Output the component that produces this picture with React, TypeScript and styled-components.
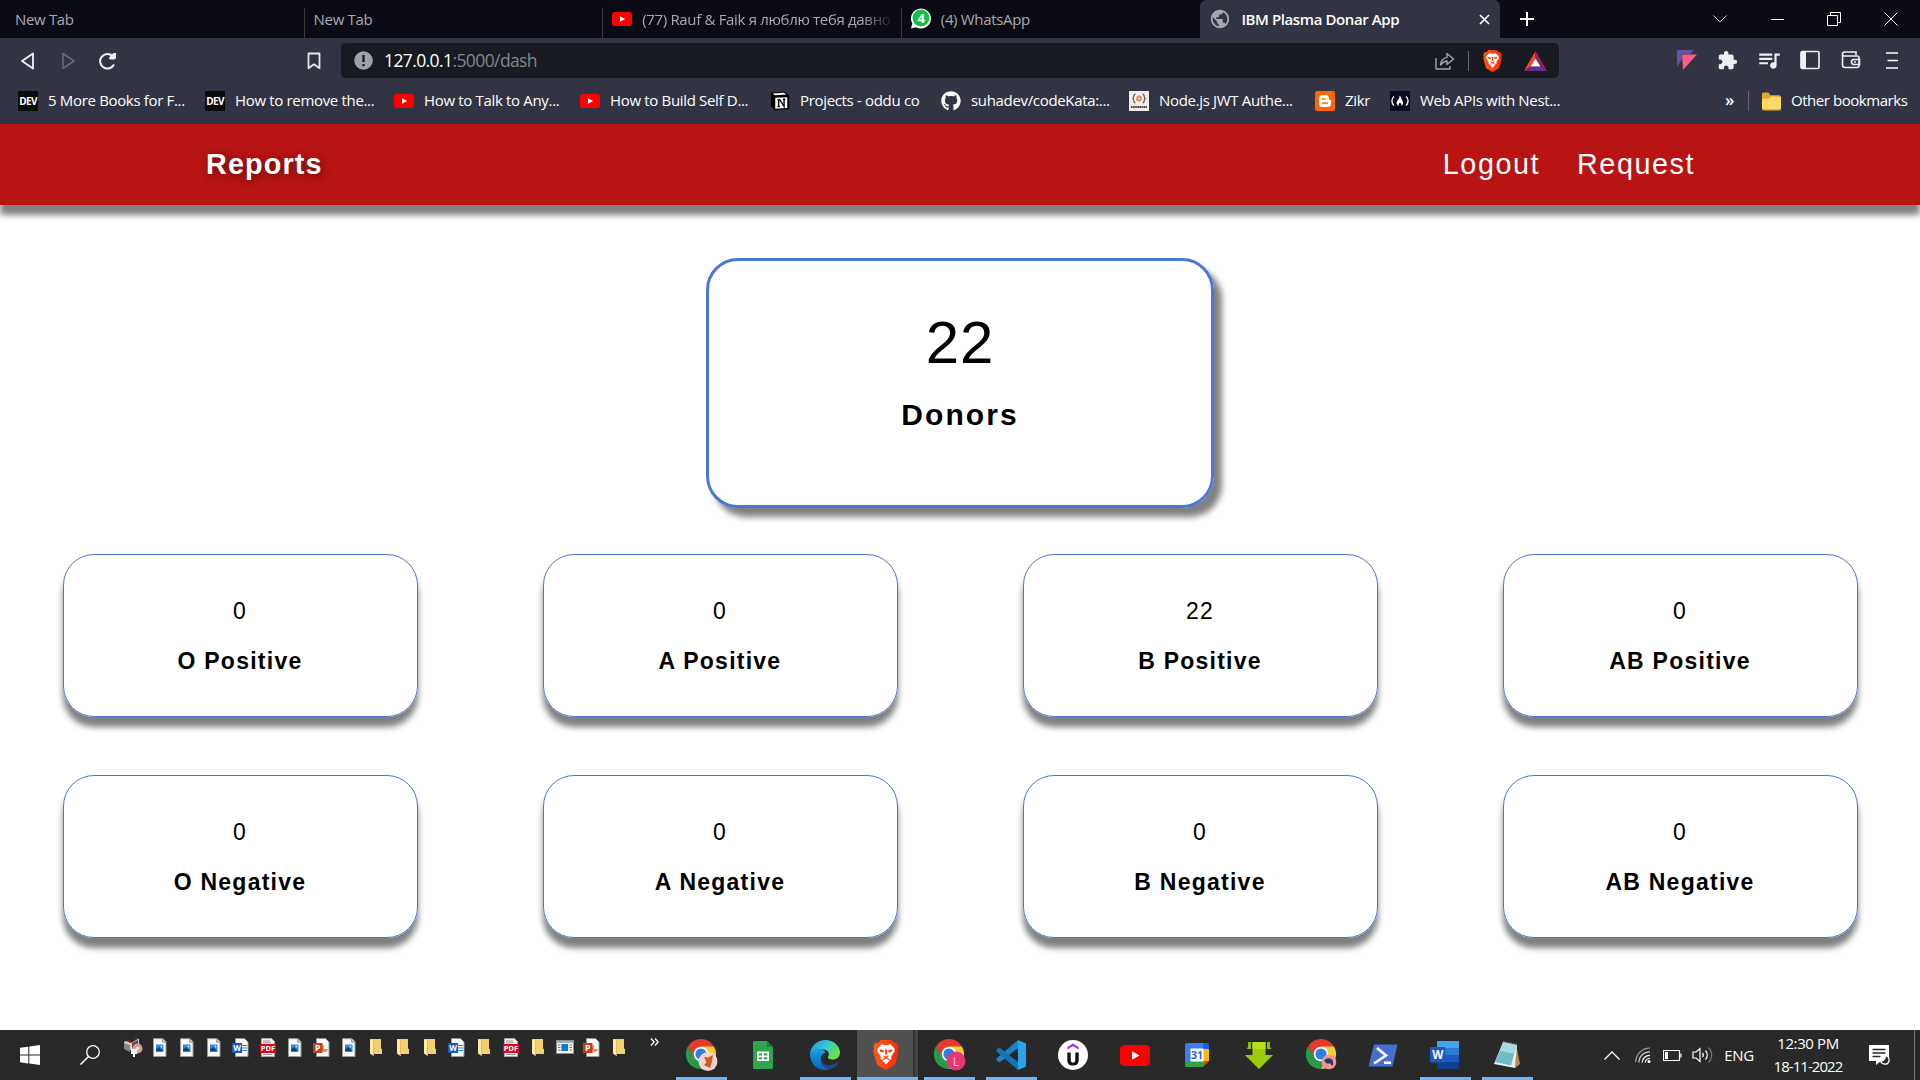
import React from 'react';
import styled, { createGlobalStyle, css } from 'styled-components';
import { FaGithub } from 'react-icons/fa';
import { MdExtension, MdPublic, MdQueueMusic } from 'react-icons/md';

const GlobalStyle = createGlobalStyle`
  * { box-sizing: border-box; }
  body { margin: 0; background: #fff; overflow: hidden; }
  svg { display: block; flex: none; }
`;

const uiFont = css`font-family: "Open Sans", "Noto Sans", sans-serif;`;

const Screen = styled.div`
  width: 1920px;
  height: 1080px;
  display: flex;
  flex-direction: column;
  background: #fff;
  ${uiFont}
`;

/* ---------- browser chrome ---------- */
const TabStrip = styled.div`
  height: 38px;
  padding-left: 6px;
  display: flex;
  background: #0a0b14;
`;
const Tab = styled.div<{ $active?: boolean; $divider?: boolean }>`
  width: ${p => (p.$active ? 300 : 298.6)}px;
  padding: ${p => (p.$active ? '0 9px' : '0 9px 1px')};
  display: flex;
  align-items: center;
  gap: 10px;
  font-size: 15px;
  white-space: nowrap;
  letter-spacing: ${p => (p.$active ? '-0.4px' : '-0.33px')};
  color: ${p => (p.$active ? '#fff' : '#a9aab0')};
  font-weight: ${p => (p.$active ? 600 : 400)};
  background: ${p => (p.$active ? '#323443' : 'transparent')};
  border-radius: ${p => (p.$active ? '6px 6px 0 0' : 0)};
  border-right: 1px solid transparent;
  border-image: ${p => (p.$divider ? 'linear-gradient(transparent 9px, #3a3b42 9px) 1' : 'none')};
`;
const TabTitle = styled.span<{ $fade?: boolean }>`
  flex: 1;
  overflow: hidden;
  line-height: 22px;
  ${p => p.$fade && css`mask-image: linear-gradient(90deg, #000 88%, transparent 101%);`}
`;
const NewTab = styled.div`
  width: 54px;
  display: grid;
  place-items: center;
`;
const WindowControls = styled.div`
  margin-left: auto;
  display: grid;
  grid-template-columns: repeat(4, 57.2px);
  place-items: center;
`;
const AddressRow = styled.div`
  height: 45px;
  display: flex;
  align-items: center;
  background: #323443;
`;
const NavButtons = styled.div`
  width: 341px;
  display: flex;
  align-items: center;
  padding-left: 20px;
`;
const NavSlot = styled.div<{ $w: number }>`
  width: ${p => p.$w}px;
  display: flex;
`;
const AddressBar = styled.div`
  width: 1218px;
  height: 35px;
  display: flex;
  align-items: center;
  border-radius: 5px;
  background: #171a21;
  padding: 0 12px 0 13px;
  font-size: 17.5px;
  letter-spacing: -0.6px;
  color: #fff;
`;
const Url = styled.span`
  flex: 1;
  padding: 0 0 2px 11px;
  line-height: 24px;
`;
const UrlPath = styled.span`color: #84868d;`;
const AddressTools = styled.div`
  display: flex;
  align-items: center;
`;
const Divider = styled.div<{ $h: number }>`
  width: 1px;
  height: ${p => p.$h}px;
  background: #666874;
`;
const Extensions = styled.div`
  margin-left: auto;
  margin-right: 8px;
  padding-bottom: 1px;
  display: grid;
  grid-template-columns: repeat(6, 41px);
  place-items: center;
  color: #efeff1;
`;
const BookmarkBar = styled.div`
  height: 41px;
  padding: 0 14px 5px 18px;
  display: flex;
  align-items: center;
  background: #323443;
  color: #fff;
  font-size: 15px;
  letter-spacing: -0.33px;
  line-height: 22px;
`;
const Bookmark = styled.div<{ $w: number }>`
  width: ${p => p.$w}px;
  display: flex;
  align-items: center;
  gap: 10px;
  white-space: nowrap;
`;
const BookmarkLabel = styled.span`padding-bottom: 2px;`;
const DevBadge = styled.span`
  width: 20px;
  height: 20px;
  display: grid;
  place-items: center;
  background: #0b0b0c;
  font: 700 10px/20px "Open Sans", sans-serif;
  letter-spacing: -0.6px;
`;
const Overflow = styled.span`
  margin-left: auto;
  width: 23px;
  padding-bottom: 2px;
  font-size: 17px;
  font-weight: 600;
  line-height: 18px;
`;
const OtherBookmarks = styled.div`
  margin-left: 13px;
  width: 144px;
  display: flex;
  align-items: center;
  gap: 10px;
  white-space: nowrap;
  letter-spacing: -0.45px;
`;

/* ---------- web page ---------- */
const PageHeader = styled.header`
  position: relative;
  flex: none;
  height: 81px;
  display: flex;
  align-items: center;
  justify-content: space-between;
  padding: 0 225px 2px 206px;
  background: #b71413;
  box-shadow: 0 10px 6.25px gray;
  color: #fff;
  font-family: "Liberation Sans", Arial, sans-serif;
  font-size: 28.75px;
  line-height: 36px;
`;
const Brand = styled.div`
  font-weight: 700;
  letter-spacing: 1.15px;
  text-shadow: 2px 2px 8px rgba(0, 0, 0, 0.45);
`;
const Nav = styled.nav`
  display: flex;
  gap: 37px;
  letter-spacing: 1.55px;
`;
const Page = styled.main`
  flex: 1;
  display: flex;
  flex-direction: column;
  align-items: center;
  padding-top: 53px;
  color: #000;
  font-family: "Liberation Sans", Arial, sans-serif;
  text-align: center;
`;
const TotalCard = styled.section`
  width: 508px;
  height: 250px;
  border: 3px solid #4a78d6;
  border-radius: 32px;
  box-shadow: 8px 9px 6.25px gray;
  padding-top: 48px;
`;
const TotalNumber = styled.div`
  font-size: 60px;
  line-height: 68px;
  letter-spacing: 1px;
`;
const TotalLabel = styled.div`
  margin-top: 20px;
  font-size: 30px;
  line-height: 36px;
  font-weight: 700;
  letter-spacing: 2.1px;
`;
const Groups = styled.section`
  margin-top: 46px;
  display: grid;
  grid-template-columns: repeat(4, 480px);
  grid-auto-rows: 221px;
  justify-items: center;
`;
const GroupCard = styled.article`
  width: 355px;
  height: 163px;
  border: 1px solid #4a78d6;
  border-radius: 31px;
  box-shadow: 0 10px 6.25px gray;
  padding-top: 42px;
  font-size: 23px;
  line-height: 28px;
  letter-spacing: 1.25px;
`;
const GroupLabel = styled.div`
  margin-top: 22px;
  font-weight: 700;
`;

/* ---------- taskbar ---------- */
const Taskbar = styled.footer`
  height: 50px;
  flex: none;
  display: flex;
  background: #292929;
  color: #fff;
`;
const SystemButtons = styled.div`
  width: 119px;
  display: grid;
  grid-template-columns: 60px 59px;
  place-items: center;
`;
const QuickLaunch = styled.div`
  height: 34px;
  display: grid;
  grid-template-columns: repeat(19, 27px);
  place-items: center;
`;
const QuickMore = styled.div`
  width: 38px;
  padding: 8px 0 0 18px;
`;
const Apps = styled.div`
  display: flex;
`;
const AppButton = styled.div<{ $state?: 'open' | 'active' }>`
  width: 62px;
  display: flex;
  flex-direction: column;
  align-items: center;
  background: ${p => (p.$state === 'active' ? 'linear-gradient(90deg, #515151 56px, #333 56px, #333 58px, #454545 58px) no-repeat 1px 0 / 61px 100%' : 'none')};
  &::after {
    content: "";
    width: ${p => (p.$state === 'active' ? 61 : 51)}px;
    height: 3px;
    background: ${p => (p.$state ? '#76b5f5' : 'transparent')};
  }
`;
const AppIcon = styled.div<{ $shift?: boolean }>`
  flex: 1;
  padding-top: 3px;
  padding-right: ${p => (p.$shift ? 3 : 0)}px;
  display: grid;
  place-items: center;
`;
const Tray = styled.div`
  margin-left: auto;
  display: flex;
  align-items: center;
  font-size: 15px;
  letter-spacing: -0.4px;
`;
const TraySlot = styled.div<{ $w: number }>`
  width: ${p => p.$w}px;
  display: grid;
  place-items: center;
`;
const Clock = styled.div`
  width: 96px;
  text-align: center;
  line-height: 23px;
  white-space: nowrap;
`;
const ClockDate = styled.div`
  letter-spacing: -0.95px;
`;
const ActionCenter = styled.div`
  width: 58px;
  padding-left: 12px;
`;
const ShowDesktop = styled.div`
  width: 6px;
  height: 50px;
  border-left: 1px solid #77777a;
`;

/* ---------- drawings ---------- */
const YouTube = ({ w = 20 }: { w?: number }) => (
  <svg width={w} height={w * 0.7} viewBox="0 0 30 21">
    <rect width="30" height="21" rx="4.5" fill="#f00" />
    <path d="M12 6.2v8.6l7.6-4.3z" fill="#fff" />
  </svg>
);
const Lion = ({ h }: { h: number }) => (
  <svg width={(h * 26) / 30} height={h} viewBox="0 0 26 30">
    <defs>
      <linearGradient id="shield" x1="0" x2="1"><stop stopColor="#ff5a14" /><stop offset="1" stopColor="#fa2a08" /></linearGradient>
    </defs>
    <path d="M7.500 0h11l2.700 3 2.300-.4 2.200 3.600-.8 2.500.8 2.300-3.300 12.300a4 4 0 0 1-1.500 2.200L13 30l-7.900-4.500a4 4 0 0 1-1.500-2.200L.3 11l.8-2.300-.8-2.500 2.200-3.600 2.300.4z" fill="url(#shield)" />
    <path d="M8.500 4.300l4.500.9 4.500-.9 4 4.200.2 2.700-3.400 5 .2 2.300-2.700 2.200L13 23.700l-2.800-3-2.700-2.200.2-2.300-3.400-5 .2-2.700z" fill="#fff" />
    <path d="M6.500 9.200l4.500 1-.7 2.200-2.800-.5zM19.500 9.200l-4.500 1 .7 2.200 2.800-.5zM11.800 9.500h2.400l-.6 5.500h-1.200zM10 15.200l3 1.200 3-1.200-1.500 2.300L13 18.500l-1.500-1zM9.300 19l3.700-1.600L16.700 19l-1 .9-2.700-1.300-2.700 1.300z" fill="#fb4212" />
    <path d="M10 21l3-1.500 3 1.500-3 3.500z" fill="#fff" />
  </svg>
);
const WhatsApp = () => (
  <svg width="20" height="21" viewBox="0 0 20 21">
    <path d="M0 20.5l1.3-5A10 10 0 1 1 5 19.2z" fill="#fff" />
    <circle cx="10" cy="10.1" r="8.5" fill="#12c143" />
    <text x="10" y="15" textAnchor="middle" fill="#fff" fontFamily="Open Sans" fontWeight="700" fontSize="13">4</text>
  </svg>
);
const Notion = () => (
  <svg width="20" height="20" viewBox="0 0 24 24">
    <path d="M1 2L17 1l6 4v17l-17 1-5-5z" fill="#000" />
    <path d="M6.300 8.200l14.400-.8v13l-14.400.8zM3 3l13.600-1 3 2.200-13.500.9z" fill="#fff" />
    <path d="M9 18.700h3M10.400 18.500V10.400M9 10.400h2.600l5.300 8.100V9.800M15.400 9.800h3" stroke="#000" strokeWidth="1.700" fill="none" />
  </svg>
);
const Folder = () => (
  <svg width="19" height="19" viewBox="0 0 19 17" preserveAspectRatio="none">
    <path d="M0 2a1.500 1.500 0 0 1 1.500-1.500h5L8.500 3H17a2 2 0 0 1 2 2v10a1.500 1.500 0 0 1-1.500 1.500h-16A1.500 1.500 0 0 1 0 15z" fill="#e0a92c" />
    <path d="M0 6h7l2-2h8.500A1.500 1.500 0 0 1 19 5.500V14a1.500 1.500 0 0 1-1.500 1.500h-16A1.500 1.500 0 0 1 0 14z" fill="#ffd964" />
  </svg>
);
const Doc = ({ kind }: { kind: string }) => {
  if (kind === 'folder')
    return (
      <svg width="14" height="19" viewBox="0 0 14 19">
        <path d="M1 1h11v9.500l1 .5v5H4z" fill="#f3cf6e" />
        <path d="M1 1l3.500 2v15L1 15.500z" fill="#ffe9a6" />
        <path d="M4.500 3v15" stroke="#d9ae4b" strokeWidth=".7" />
      </svg>
    );
  if (kind === 'tool')
    return (
      <svg width="20" height="20" viewBox="0 0 20 20">
        <path d="M1 5l8-4 7 1v7l-9 4-6-2z" fill="#d6d2cd" />
        <path d="M2 3.500l7-3 6 1.500-7 4z" fill="#3a2424" />
        <path d="M1 6l6 2v7l-6-3z" fill="#888" />
        <path d="M9 6l6-3v5l-6 3z" fill="#5a4646" />
        <circle cx="14.500" cy="11.500" r="5" fill="#d99c93" />
        <circle cx="14.500" cy="11.500" r="1.800" fill="#f9e9df" />
        <path d="M8 12h6v5h-2v3h-2v-3H8z" fill="#f2f2f2" />
        <path d="M4 3.500l4 2" stroke="#a22" strokeWidth="1.500" />
      </svg>
    );
  if (kind === 'window')
    return (
      <svg width="18" height="14" viewBox="0 0 18 14">
        <rect x=".5" y=".5" width="17" height="13" fill="#f5f5f5" stroke="#8c9299" />
        <path d="M1 2h16" stroke="#a5adb5" strokeWidth="2" />
        <rect x="5.500" y="4" width="6.500" height="7" fill="#0a7ad8" />
        <path d="M2 5h2.500M2 7.500h2.500M2 10h2.500M13.500 5H16M13.500 7.500H16M13.500 10H16" stroke="#777" />
      </svg>
    );
  const sheet = <path d="M4.500 .5h9l3.500 3.500v14.500H4.500z" fill="#fafafa" stroke="#9a9a9a" />;
  return (
    <svg width="20" height="19" viewBox="0 0 20 19">
      {kind === 'image' ? (
        <>
          <path d="M3.500 .7h9.500l3 3v14.800H3.500z" fill="#fafafa" stroke="#9a9a9a" />
          <path d="M12.500 1v3.200h3.500" fill="#ccc" stroke="#9a9a9a" />
          <rect x="6" y="6.500" width="7.500" height="7" fill="#2a8be0" />
          <path d="M6 13.500v-2l3-2.500 4.500 4.500z" fill="#143f78" />
          <circle cx="11.500" cy="8.500" r="1" fill="#c3e5ff" />
        </>
      ) : kind === 'word' ? (
        <>
          {sheet}
          <path d="M11 7.500h5M11 10h5M11 12.500h5" stroke="#2b7cd3" />
          <rect x="1" y="5" width="10" height="10" fill="#185abd" />
          <text x="6" y="13" textAnchor="middle" fontFamily="Open Sans" fontWeight="700" fontSize="8" fill="#fff">W</text>
        </>
      ) : kind === 'ppt' ? (
        <>
          {sheet}
          <path d="M12 7a3.500 3.500 0 1 0 4 4h-4z" fill="#f08a66" />
          <rect x="1" y="5" width="9.500" height="10" fill="#c43e1c" />
          <text x="5.700" y="13" textAnchor="middle" fontFamily="Open Sans" fontWeight="700" fontSize="8.500" fill="#fff">P</text>
        </>
      ) : (
        <>
          <path d="M3.500 .5h10l3 3v15h-13z" fill="#f2f2f2" stroke="#aaa" />
          <path d="M5 3h7M5 4.800h8M5 16.500h9" stroke="#999" />
          <rect x="2" y="6" width="16" height="9" fill="#e2001a" />
          <text x="10" y="13.300" textAnchor="middle" fontFamily="Open Sans" fontWeight="700" fontSize="7.500" fill="#fff">PDF</text>
        </>
      )}
    </svg>
  );
};
const Chrome = ({ badge }: { badge: 'fox' | 'L' | 'pink' }) => (
  <svg width="34" height="34" viewBox="-2 -1 34 34">
    <path d="M15 15L2 7.500A15 15 0 0 1 28 7.500z" fill="#e33b2e" />
    <path d="M15 15V7.500h13A15 15 0 0 1 15 30z" fill="#fcc934" />
    <path d="M2 7.500A15 15 0 0 0 15 30l6.500-11.300L15 15 8.500 18.700z" fill="#2a9a48" />
    <path d="M2 7.500l6.500 11.200L15 7.500z" fill="#e33b2e" />
    <path d="M2 7.500A15 15 0 0 0 9 28.700L10 20 8.500 18.700z" fill="#2a9a48" />
    <circle cx="15" cy="15" r="7.300" fill="#fff" />
    <circle cx="15" cy="15" r="5.600" fill="#2f7de8" />
    {badge === 'fox' && (<><circle cx="22" cy="22.500" r="9.500" fill="#f6d3cc" /><path d="M18 18l4 .5 5-2.500-1 6.500-2 6.500-6-3 2.500-2.500z" fill="#d8581f" /></>)}
    {badge === 'L' && (<><circle cx="22" cy="22" r="9.500" fill="#e63673" /><text x="22" y="26.500" textAnchor="middle" fontFamily="Open Sans" fontSize="12" fill="#f9c3d5">L</text></>)}
    {badge === 'pink' && (<><circle cx="23" cy="23" r="7.300" fill="#f4949c" /><path d="M18 22c1-3 6-4 8.500-1 1 2 1 5-.5 6l-1.500-2.500h-4l-1-1.500z" fill="#253e5e" /></>)}
  </svg>
);
const Sheets = () => (
  <svg width="20" height="28" viewBox="0 0 20 28">
    <path d="M1.500 0H14l6 6v20.500A1.500 1.500 0 0 1 18.500 28h-17A1.500 1.500 0 0 1 0 26.500v-25A1.500 1.500 0 0 1 1.500 0z" fill="#2fa551" />
    <path d="M14 0l6 6h-6z" fill="#1b7f3a" />
    <path d="M4 10.500h12v9.500H4zM5.800 12.300v2.200h3.400v-2.200zM10.900 12.300v2.200h3.400v-2.200zM5.800 16.200v2h3.400v-2zM10.900 16.200v2h3.400v-2z" fill="#fff" fillRule="evenodd" />
  </svg>
);
const Edge = () => (
  <svg width="30" height="30" viewBox="0 0 30 30">
    <defs>
      <linearGradient id="edgeTop" x1="0" x2="1" y2=".5"><stop stopColor="#1b8fd6" /><stop offset=".5" stopColor="#34c3e0" /><stop offset="1" stopColor="#6be04a" /></linearGradient>
      <linearGradient id="edgeLow" x1="0" x2="0" y2="1"><stop stopColor="#1ca0e2" /><stop offset="1" stopColor="#0b5fc0" /></linearGradient>
    </defs>
    <path d="M0 14C1 5 8 0 15 0c9 0 15 6.500 15 12.500 0 4.500-3.500 7-7.500 7-3.500 0-5-1.300-4.500-2.500 2-3 .5-7-4.500-7.500C7.500 8.500 2 11 0 14z" fill="url(#edgeTop)" />
    <path d="M0 14c2-4 7-6 11-5 2.500.5 4 2 4.500 3.500-3.500 1-5 4-4.500 7.500.7 5 5 8.500 9 9-2 .8-3.500 1-5 1C6 30 0 23 0 14z" fill="url(#edgeLow)" />
    <path d="M11.500 16c-1.500 5 2 9 7 9.200 4 .1 7-1.700 9-3.200.8-.5 1 .2.6 1-2.100 4-6.100 6-9.100 6-5-.5-10-6-7.500-13z" fill="#154b8f" />
  </svg>
);
const VSCode = () => (
  <svg width="30" height="30" viewBox="0 0 30 30">
    <path d="M22 0v8L3.500 22.500.500 20.500v-2L22 0z" fill="#1c83c8" />
    <path d="M22 30v-8L3.500 7.500.500 9.500v2L22 30z" fill="#1374b8" />
    <path d="M22 0l8 3.500v23L22 30z" fill="#2aa4ee" />
  </svg>
);
const Udemy = () => (
  <svg width="30" height="30" viewBox="0 0 30 30">
    <circle cx="15" cy="15" r="15" fill="#fff" />
    <path d="M9.300 9.500V7L15 3.500 20.700 7v2.500L15 6.300z" fill="#a435f0" />
    <path d="M9.300 12.500h3.400v7.500c0 1.900 1 2.700 2.300 2.700s2.300-.8 2.300-2.700v-7.500h3.400v7.700c0 3.600-2.300 5.400-5.700 5.400s-5.700-1.800-5.700-5.400z" fill="#111" />
  </svg>
);
const Calendar = () => (
  <svg width="24" height="24" viewBox="0 0 24 24">
    <path d="M1.500 0H18v6H6v12H0V1.500z" fill="#3b7ff0" />
    <path d="M18 0h4.500A1.500 1.500 0 0 1 24 1.500V6h-6z" fill="#1a63d2" />
    <path d="M18 6h6v12h-6z" fill="#fbbc04" />
    <path d="M0 18h18v6H1.500A1.500 1.500 0 0 1 0 22.500z" fill="#2fa24c" />
    <path d="M18 18h6l-6 6z" fill="#ea4335" />
    <path d="M5.500 5.500h13v13h-13z" fill="#fff" />
    <text x="12" y="16" textAnchor="middle" fontFamily="Open Sans" fontWeight="700" fontSize="10.500" fill="#2468d8">31</text>
  </svg>
);
const Downloader = () => (
  <svg width="30" height="29" viewBox="0 0 30 29">
    <path d="M8.500 1h13v13H29L15 28 1 14h7.500z" fill="#9ccb0b" />
    <path d="M4 1h3v7H2.500L4 6zM23 1h3v5l1.500 2H23z" fill="#8fbb0c" />
    <path d="M8.500 1h13v7h-13z" fill="#b5e01c" />
  </svg>
);
const PowerShell = () => (
  <svg width="30" height="23" viewBox="0 0 30 23">
    <path d="M6 .5h23.500L24.500 22.500H.5z" fill="#4170cf" />
    <path d="M9 4l9 7.500-12 8M16 18.700h7" stroke="#fff" strokeWidth="2.600" fill="none" />
  </svg>
);
const Word = () => (
  <svg width="30" height="28" viewBox="0 0 30 28">
    <path d="M7 0h22v7H7z" fill="#41a5ee" /><path d="M7 7h22v7H7z" fill="#2b7cd3" />
    <path d="M7 14h22v7H7z" fill="#185abd" /><path d="M7 21h22v7H7z" fill="#103f91" />
    <rect x="0" y="6" width="15.500" height="15.500" rx="1" fill="#1c5bbd" />
    <text x="7.700" y="18" textAnchor="middle" fontFamily="Open Sans" fontWeight="700" fontSize="11.500" fill="#fff">W</text>
  </svg>
);
const Notepad = () => (
  <svg width="30" height="28" viewBox="0 0 30 28">
    <path d="M24 3l4 20-5 4z" fill="#b98b50" />
    <path d="M11 1l14 3-2 23-21-4z" fill="#e4eef0" />
    <path d="M11 3l13 2.500-5 19L3 21z" fill="#6fbcc8" />
    <path d="M11 3l13 2.500-2 7L8 10z" fill="#a7dbe2" />
    <path d="M11 1l14 3" stroke="#8b979b" strokeWidth="2" strokeDasharray="1.500 1" />
  </svg>
);

type BookmarkItem = { icon: React.ReactNode; label: string; w: number };
const bookmarks: BookmarkItem[] = [
  { icon: <DevBadge>DEV</DevBadge>, label: '5 More Books for F...', w: 187 },
  { icon: <DevBadge>DEV</DevBadge>, label: 'How to remove the...', w: 189 },
  { icon: <YouTube />, label: 'How to Talk to Any...', w: 186 },
  { icon: <YouTube />, label: 'How to Build Self D...', w: 190 },
  { icon: <Notion />, label: 'Projects - oddu co', w: 171 },
  { icon: <FaGithub size={20} />, label: 'suhadev/codeKata:...', w: 188 },
  {
    icon: (
      <svg width="20" height="20" viewBox="0 0 20 20">
        <rect width="20" height="20" fill="#f1ece8" />
        <path d="M6.500 3C3.500 3 6 7 3.500 7.500 6 8 3.500 12 6.500 12M13.500 3c3 0 .5 4 3 4.500-2.500.5 0 4.500-3 4.500" stroke="#555" strokeWidth="1.200" fill="none" />
        <circle cx="10" cy="7.500" r="2.300" fill="#f0b9a0" stroke="#e4815b" strokeWidth="1.200" />
        <path d="M2 16h16" stroke="#444" strokeWidth="2.200" strokeDasharray="1.600 .5" />
      </svg>
    ),
    label: 'Node.js JWT Authe...', w: 186,
  },
  {
    icon: (
      <svg width="20" height="20" viewBox="0 0 20 20">
        <rect width="20" height="20" rx="2" fill="#f60" />
        <path d="M7.500 4h3A3.500 3.500 0 0 1 14 7.500c0 1 .3 1.200 1 1.300.7.100 1 .4 1 1.200v2.500a3.500 3.500 0 0 1-3.500 3.500h-5A3.500 3.500 0 0 1 4 12.500v-5A3.500 3.500 0 0 1 7.500 4z" fill="#fff" />
        <path d="M7.500 8h2.500M7.500 12h5" stroke="#f60" strokeWidth="1.500" strokeLinecap="round" />
      </svg>
    ),
    label: 'Zikr', w: 75,
  },
  {
    icon: (
      <svg width="20" height="20" viewBox="0 0 20 20">
        <rect width="20" height="20" fill="#0a0a23" />
        <path d="M4 5.500C1.200 8 1.200 12 4 14.500M16 5.500c2.800 2.500 2.800 6.500 0 9" stroke="#fff" strokeWidth="1.300" fill="none" />
        <path d="M9.500 4.500c2 1.500 1.500 3 2.500 4.500 1.500 2 1.500 4.500-.5 6 .3-2-.5-2.500-1.500-3.500-1 1-1.800 1.800-1.200 3.500C6.500 14 6 11.500 7.500 9.500 8.700 8 9.800 6.500 9.500 4.500z" fill="#fff" />
      </svg>
    ),
    label: 'Web APIs with Nest...', w: 180,
  },
];

const quickItems = ['tool', 'image', 'image', 'image', 'word', 'pdf', 'image', 'ppt', 'image', 'folder', 'folder', 'folder', 'word', 'folder', 'pdf', 'folder', 'window', 'ppt', 'folder'];

const apps: { icon: React.ReactNode; state?: 'open' | 'active' }[] = [
  { icon: <Chrome badge="fox" />, state: 'open' },
  { icon: <Sheets /> },
  { icon: <Edge />, state: 'open' },
  { icon: <Lion h={30} />, state: 'active' },
  { icon: <Chrome badge="L" />, state: 'open' },
  { icon: <VSCode />, state: 'open' },
  { icon: <Udemy /> },
  { icon: <YouTube w={30} /> },
  { icon: <Calendar /> },
  { icon: <Downloader /> },
  { icon: <Chrome badge="pink" /> },
  { icon: <PowerShell /> },
  { icon: <Word />, state: 'open' },
  { icon: <Notepad />, state: 'open' },
];

const groups = [
  { label: 'O Positive', count: 0 },
  { label: 'A Positive', count: 0 },
  { label: 'B Positive', count: 22 },
  { label: 'AB Positive', count: 0 },
  { label: 'O Negative', count: 0 },
  { label: 'A Negative', count: 0 },
  { label: 'B Negative', count: 0 },
  { label: 'AB Negative', count: 0 },
];

const BrowserTabs = () => (
  <TabStrip>
    <Tab $divider><TabTitle>New Tab</TabTitle></Tab>
    <Tab $divider><TabTitle>New Tab</TabTitle></Tab>
    <Tab $divider><YouTube /><TabTitle $fade>(77) Rauf &amp; Faik я люблю тебя давно</TabTitle></Tab>
    <Tab><WhatsApp /><TabTitle>(4) WhatsApp</TabTitle></Tab>
    <Tab $active>
      <MdPublic size={22} color="#a7a9b0" />
      <TabTitle>IBM Plasma Donar App</TabTitle>
      <svg width="11" height="11" viewBox="0 0 11 11"><path d="M1 1l9 9M10 1l-9 9" stroke="#fff" strokeWidth="1.700" /></svg>
    </Tab>
    <NewTab><svg width="16" height="16" viewBox="0 0 16 16"><path d="M8 1v14M1 8h14" stroke="#fff" strokeWidth="2" /></svg></NewTab>
    <WindowControls>
      <svg width="14" height="8" viewBox="0 0 14 8"><path d="M.5.5L7 7 13.500.5" stroke="#ddd" fill="none" /></svg>
      <svg width="13" height="13" viewBox="0 0 13 13"><path d="M0 6.500h13" stroke="#fff" /></svg>
      <svg width="14" height="14" viewBox="0 0 14 14"><path d="M.5 3.500h10v10H.5zM3.500 3V.5h10v10H11" stroke="#fff" fill="none" /></svg>
      <svg width="14" height="14" viewBox="0 0 14 14"><path d="M.5.5l13 13M13.500.5l-13 13" stroke="#fff" /></svg>
    </WindowControls>
  </TabStrip>
);

const BrowserAddress = () => (
  <AddressRow>
    <NavButtons>
      <NavSlot $w={41}><svg width="15" height="18" viewBox="0 0 15 18"><path d="M13 1.500v15L2 9z" stroke="#f2f2f4" strokeWidth="1.800" strokeLinejoin="round" fill="none" /></svg></NavSlot>
      <NavSlot $w={37}><svg width="15" height="18" viewBox="0 0 15 18"><path d="M2 1.500v15L13 9z" stroke="#666875" strokeWidth="1.600" strokeLinejoin="round" fill="none" /></svg></NavSlot>
      <NavSlot $w={209}><svg width="19" height="18" viewBox="0 0 19 18"><path d="M14.500 4A7.300 7.300 0 1 0 16 12.500" stroke="#f2f2f4" strokeWidth="2" fill="none" /><path d="M18 1v4.500a2 2 0 0 1-2 2h-3.500a1.500 1.500 0 0 1-1-2.500l4-4z" fill="#f2f2f4" /></svg></NavSlot>
      <NavSlot $w={15}><svg width="14" height="18" viewBox="0 0 14 18"><path d="M1.500 1.500h11v14.700L7 12.300l-5.500 3.900z" stroke="#e6e6ea" strokeWidth="1.800" strokeLinejoin="round" fill="none" /></svg></NavSlot>
    </NavButtons>
    <AddressBar>
      <svg width="19" height="19" viewBox="0 0 19 19"><circle cx="9.500" cy="9.500" r="9.300" fill="#9fa1aa" /><path d="M9.500 4v7M9.500 13v2.300" stroke="#171a21" strokeWidth="2.300" /></svg>
      <Url>127.0.0.1<UrlPath>:5000/dash</UrlPath></Url>
      <AddressTools>
        <NavSlot $w={33}><svg width="20" height="18" viewBox="0 0 20 18"><path d="M1 6v11h14v-3M5.500 13C6 8 8 6 12 5.600V1.500L18.500 7 12 12.500V9C9 9 7.500 10.500 5.500 13z" stroke="#a3a4a9" strokeWidth="1.400" fill="none" strokeLinejoin="round" /></svg></NavSlot>
        <NavSlot $w={15}><Divider $h={20} /></NavSlot>
        <NavSlot $w={41}><Lion h={22} /></NavSlot>
        <svg width="23" height="20" viewBox="0 0 23 20">
          <path d="M11.500 0L0 20l6-4.500 5.500-8z" fill="#ff4724" />
          <path d="M11.500 0L23 20l-6-4.500-5.500-8z" fill="#9e1f63" />
          <path d="M0 20h23l-6-4.500H6z" fill="#662d91" />
          <path d="M11.500 7.500L6.500 15.500h10z" fill="#fff" />
        </svg>
      </AddressTools>
    </AddressBar>
    <Extensions>
      <svg width="20" height="20" viewBox="0 0 20 20"><path d="M0 0h17l-4 4H5v5L0 17z" fill="#6054a8" /><path d="M5 4.500h15L6 20z" fill="#fb5c85" /></svg>
      <MdExtension size={21} />
      <MdQueueMusic size={26} />
      <svg width="20" height="20" viewBox="0 0 20 20"><rect x="1" y="1.500" width="18" height="17" rx="1.500" stroke="#efeff1" strokeWidth="1.700" fill="none" /><path d="M1 1.500h5v17H1z" fill="#efeff1" /></svg>
      <svg width="20" height="18" viewBox="0 0 20 18"><path d="M1.500 3v11a2.500 2.500 0 0 0 2.500 2.500h12a2 2 0 0 0 2-2V7a2 2 0 0 0-2-2H3.500a2 2 0 0 1 0-4H15v3M18.500 8.500H13a2 2 0 0 0 0 5h5.500z" stroke="#efeff1" strokeWidth="1.600" fill="none" /><circle cx="14" cy="11" r="1" fill="#efeff1" /></svg>
      <svg width="12" height="17" viewBox="0 0 12 17"><path d="M0 1h12M1.500 8.500H12M0 16h12" stroke="#fff" strokeWidth="1.500" /></svg>
    </Extensions>
  </AddressRow>
);

const SystemTray = () => (
  <Tray>
    <TraySlot $w={31}><svg width="16" height="9" viewBox="0 0 16 9"><path d="M.5 8.500L8 1l7.500 7.500" stroke="#fff" strokeWidth="1.300" fill="none" /></svg></TraySlot>
    <TraySlot $w={31}>
      <svg width="16" height="16" viewBox="0 0 16 16" fill="none" strokeWidth="1.200">
        <path d="M.7 15A14.300 14.300 0 0 1 15 1" stroke="#aaa" />
        <path d="M4 15.500A10.500 10.500 0 0 1 15 4.800" stroke="#ccc" />
        <path d="M7.200 15.500A7.500 7.500 0 0 1 15 8.300" stroke="#fff" />
        <path d="M10.300 15.500A4.500 4.500 0 0 1 15 11.500" stroke="#fff" />
        <circle cx="14" cy="14.500" r="1.500" fill="#fff" />
      </svg>
    </TraySlot>
    <TraySlot $w={29}><svg width="19" height="11" viewBox="0 0 19 11"><path d="M.5.5h16v10H.5zM18 3.500v4" stroke="#fff" fill="none" strokeWidth="1.200" /><path d="M2 2h3v7H2z" fill="#fff" /></svg></TraySlot>
    <TraySlot $w={31}>
      <svg width="21" height="18" viewBox="0 0 21 18" fill="none" stroke="#fff" strokeWidth="1.200">
        <path d="M1 6h3l4-3.500v13L4 12H1z" /><path d="M10.500 7a3 3 0 0 1 0 4M13.500 4.500a6.500 6.500 0 0 1 0 9" /><path d="M16.500 1.500a10.500 10.500 0 0 1 0 15" stroke="#777" />
      </svg>
    </TraySlot>
    <TraySlot $w={42}>ENG</TraySlot>
    <Clock>12:30 PM<ClockDate>18-11-2022</ClockDate></Clock>
    <ActionCenter>
      <svg width="22" height="22" viewBox="0 0 22 22">
        <path d="M1 1h20v16h-8l-5 4v-4H1z" fill="#fff" />
        <path d="M4.500 5.500h13M4.500 9h13M4.500 12.500h8" stroke="#292929" strokeWidth="1.300" />
        <path d="M17 11.500c1 3-1 5.500-4.500 5.500 1.500 4 7.500 4.500 8.500 0 .5-3-1.500-5-4-5.500z" fill="#292929" stroke="#fff" strokeWidth="1.200" />
      </svg>
    </ActionCenter>
    <ShowDesktop />
  </Tray>
);

export default function App() {
  return (
    <Screen>
      <GlobalStyle />
      <BrowserTabs />
      <BrowserAddress />
      <BookmarkBar>
        {bookmarks.map(b => (
          <Bookmark key={b.label} $w={b.w}>{b.icon}<BookmarkLabel>{b.label}</BookmarkLabel></Bookmark>
        ))}
        <Overflow>»</Overflow>
        <Divider $h={20} />
        <OtherBookmarks><Folder /><BookmarkLabel>Other bookmarks</BookmarkLabel></OtherBookmarks>
      </BookmarkBar>
      <PageHeader>
        <Brand>Reports</Brand>
        <Nav><span>Logout</span><span>Request</span></Nav>
      </PageHeader>
      <Page>
        <TotalCard>
          <TotalNumber>22</TotalNumber>
          <TotalLabel>Donors</TotalLabel>
        </TotalCard>
        <Groups>
          {groups.map(g => (
            <GroupCard key={g.label}>
              <div>{g.count}</div>
              <GroupLabel>{g.label}</GroupLabel>
            </GroupCard>
          ))}
        </Groups>
      </Page>
      <Taskbar>
        <SystemButtons>
          <svg width="20" height="20" viewBox="0 0 20 20"><path d="M0 2.800L8.300 1.700v7.900H0zM9.300 1.500L20 0v9.600H9.300zM0 10.500h8.300v7.900L0 17.300zM9.300 10.500H20V20L9.300 18.500z" fill="#fff" /></svg>
          <svg width="20" height="20" viewBox="0 0 20 20"><circle cx="13" cy="7" r="6.300" stroke="#fff" strokeWidth="1.300" fill="none" /><path d="M8.500 11.500L.5 19.500" stroke="#fff" strokeWidth="1.500" /></svg>
        </SystemButtons>
        <QuickLaunch>{quickItems.map((k, i) => <Doc key={i} kind={k} />)}</QuickLaunch>
        <QuickMore><svg width="9" height="8" viewBox="0 0 9 8"><path d="M1 .5L4.200 4 1 7.500M5 .5L8.200 4 5 7.500" stroke="#fff" strokeWidth="1.300" fill="none" /></svg></QuickMore>
        <Apps>
          {apps.map((a, i) => (
            <AppButton key={i} $state={a.state}><AppIcon $shift={a.state === 'active'}>{a.icon}</AppIcon></AppButton>
          ))}
        </Apps>
        <SystemTray />
      </Taskbar>
    </Screen>
  );
}
